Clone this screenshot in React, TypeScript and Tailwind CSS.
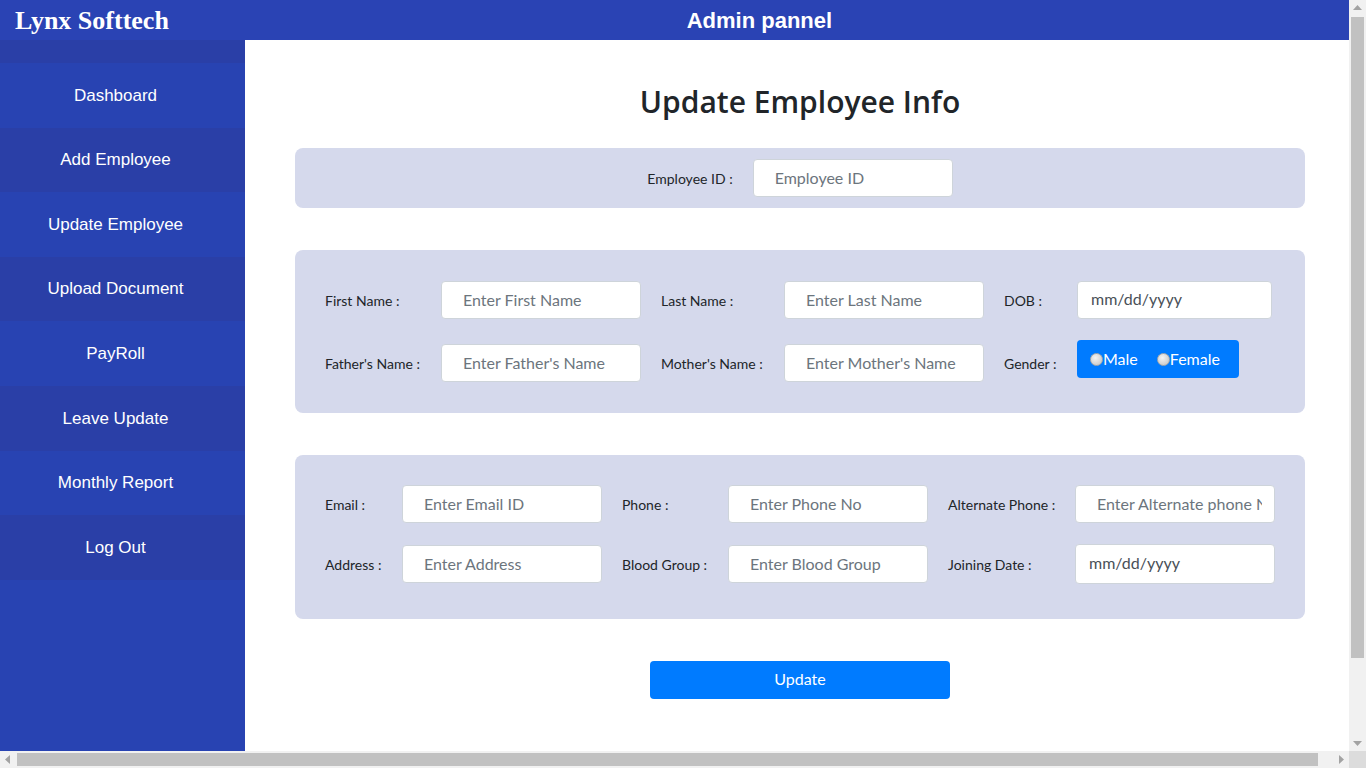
import * as React from 'react';

const NAV = [
  'Dashboard',
  'Add Employee',
  'Update Employee',
  'Upload Document',
  'PayRoll',
  'Leave Update',
  'Monthly Report',
  'Log Out',
];

function Label({ text, w }: { text: string; w: string }) {
  return <span className={`${w} shrink-0 text-[14px] text-[#212529]`}>{text}</span>;
}

function Field({ placeholder, w = 'w-[200px]' }: { placeholder: string; w?: string }) {
  return (
    <input
      placeholder={placeholder}
      className={`${w} h-[38px] shrink-0 rounded-[4px] border border-[#ced4da] bg-white pr-[12px] pb-[2px] pl-[21px] text-[16px] text-[#495057] outline-none placeholder:text-[#6c757d]`}
    />
  );
}

function DateField({ w, h = 'h-[38px]' }: { w: string; h?: string }) {
  return (
    <div
      className={`${w} ${h} flex shrink-0 items-center rounded-[4px] border border-[#ced4da] bg-white pb-[2px] pl-[13px] text-[16px] text-[#495057]`}
    >
      mm/dd/yyyy
    </div>
  );
}

function Radio({ label }: { label: string }) {
  return (
    <label className="flex items-start">
      <span className="mt-[4px] h-[13px] w-[13px] rounded-full border border-[#aaaaaa] bg-[radial-gradient(circle_at_40%_35%,#f4f4f4,#c0c0c0)]" />
      <span className="text-[16px] leading-[20px] text-white">{label}</span>
    </label>
  );
}

function Arrow({ dir }: { dir: 'up' | 'down' | 'left' | 'right' }) {
  const pts = {
    up: '4,10 8.5,5 13,10',
    down: '4,7 8.5,12 13,7',
    left: '10,4 5,8.5 10,13',
    right: '7,4 12,8.5 7,13',
  }[dir];
  return (
    <svg width="17" height="17" viewBox="0 0 17 17" className="shrink-0">
      <polygon points={pts} fill="#a3a3a3" />
    </svg>
  );
}

export default function App() {
  return (
    <div className="flex h-[768px] w-[1366px] flex-col overflow-hidden font-['Lato','Open_Sans',sans-serif]">
      <div className="flex h-[751px]">
        <div className="flex w-[1349px] flex-col overflow-hidden">
          <header className="flex h-[40px] shrink-0 items-center bg-[#2a43b4] text-white">
            <div className="px-[15px] font-['Liberation_Serif',serif] text-[26px] font-bold">Lynx Softtech</div>
            <div className="flex-1 pr-[14px] text-center font-['Liberation_Sans',Arial,sans-serif] text-[22px] font-bold">
              Admin pannel
            </div>
          </header>
          <div className="flex flex-1">
            <aside className="w-[245px] shrink-0 bg-[#2843b2] pr-[14px] font-['Liberation_Sans',Arial,sans-serif] text-[17px] text-white">
              <div className="-mr-[14px] h-[23px] bg-[#2a3fa7]" />
              {NAV.map((n, i) => (
                <div
                  key={n}
                  className={`-mr-[14px] flex h-[64.6px] items-center justify-center pr-[14px] ${i % 2 === 1 ? 'bg-[#2a3fa7]' : 'bg-[#2843b2]'}`}
                >
                  {n}
                </div>
              ))}
            </aside>
            <main className="flex-1 bg-white pl-[50px]">
              <div className="w-[1010px]">
                <h1 className="mt-[40px] text-center font-['Open_Sans',sans-serif] text-[30px] font-semibold leading-[44px] text-[#212529]">
                  Update Employee Info
                </h1>
                <section className="mt-[24px] flex h-[60px] items-center justify-center gap-[20px] rounded-[8px] bg-[#d5d9ec]">
                  <span className="text-[14px] text-[#212529]">Employee ID :</span>
                  <Field placeholder="Employee ID" />
                </section>

                <section className="mt-[42px] flex flex-col gap-[25px] rounded-[8px] bg-[#d5d9ec] px-[30px] pt-[31px] pb-[31px]">
                  <div className="flex items-center">
                    <Label text="First Name :" w="w-[116px]" />
                    <Field placeholder="Enter First Name" />
                    <span className="w-[20px]" />
                    <Label text="Last Name :" w="w-[123px]" />
                    <Field placeholder="Enter Last Name" />
                    <span className="w-[20px]" />
                    <Label text="DOB :" w="w-[73px]" />
                    <DateField w="w-[195px]" />
                  </div>
                  <div className="flex items-center">
                    <Label text="Father's Name :" w="w-[116px]" />
                    <Field placeholder="Enter Father's Name" />
                    <span className="w-[20px]" />
                    <Label text="Mother's Name :" w="w-[123px]" />
                    <Field placeholder="Enter Mother's Name" />
                    <span className="w-[20px]" />
                    <Label text="Gender :" w="w-[73px]" />
                    <div className="-mt-[8px] flex h-[38px] w-[162px] items-start gap-[19px] rounded-[4px] bg-[#007bff] pt-[9px] pl-[13px]">
                      <Radio label="Male" />
                      <Radio label="Female" />
                    </div>
                  </div>
                </section>

                <section className="mt-[42px] flex flex-col gap-[21px] rounded-[8px] bg-[#d5d9ec] px-[30px] pt-[30px] pb-[35px]">
                  <div className="flex items-center">
                    <Label text="Email :" w="w-[77px]" />
                    <Field placeholder="Enter Email ID" />
                    <span className="w-[20px]" />
                    <Label text="Phone :" w="w-[106px]" />
                    <Field placeholder="Enter Phone No" />
                    <span className="w-[20px]" />
                    <Label text="Alternate Phone :" w="w-[127px]" />
                    <Field placeholder="Enter Alternate phone No" />
                  </div>
                  <div className="flex items-center">
                    <Label text="Address :" w="w-[77px]" />
                    <Field placeholder="Enter Address" />
                    <span className="w-[20px]" />
                    <Label text="Blood Group :" w="w-[106px]" />
                    <Field placeholder="Enter Blood Group" />
                    <span className="w-[20px]" />
                    <Label text="Joining Date :" w="w-[127px]" />
                    <DateField w="w-[200px]" h="h-[40px]" />
                  </div>
                </section>

                <div className="mt-[42px] flex justify-center">
                  <button className="h-[38px] w-[300px] rounded-[4px] bg-[#007bff] pb-[2px] text-[16px] text-white">Update</button>
                </div>
              </div>
            </main>
          </div>
        </div>
        {/* vertical scrollbar */}
        <div className="flex w-[17px] flex-col bg-[#f1f1f1]">
          <Arrow dir="up" />
          <div className="mx-[2px] h-[641px] bg-[#c1c1c1]" />
          <div className="flex-1" />
          <Arrow dir="down" />
        </div>
      </div>
      {/* horizontal scrollbar */}
      <div className="flex h-[17px]">
        <div className="flex w-[1349px] items-center bg-[#f1f1f1]">
          <Arrow dir="left" />
          <div className="h-[13px] w-[1301px] bg-[#c1c1c1]" />
          <div className="flex-1" />
          <Arrow dir="right" />
        </div>
        <div className="w-[17px] bg-[#dcdcdc]" />
      </div>
    </div>
  );
}
